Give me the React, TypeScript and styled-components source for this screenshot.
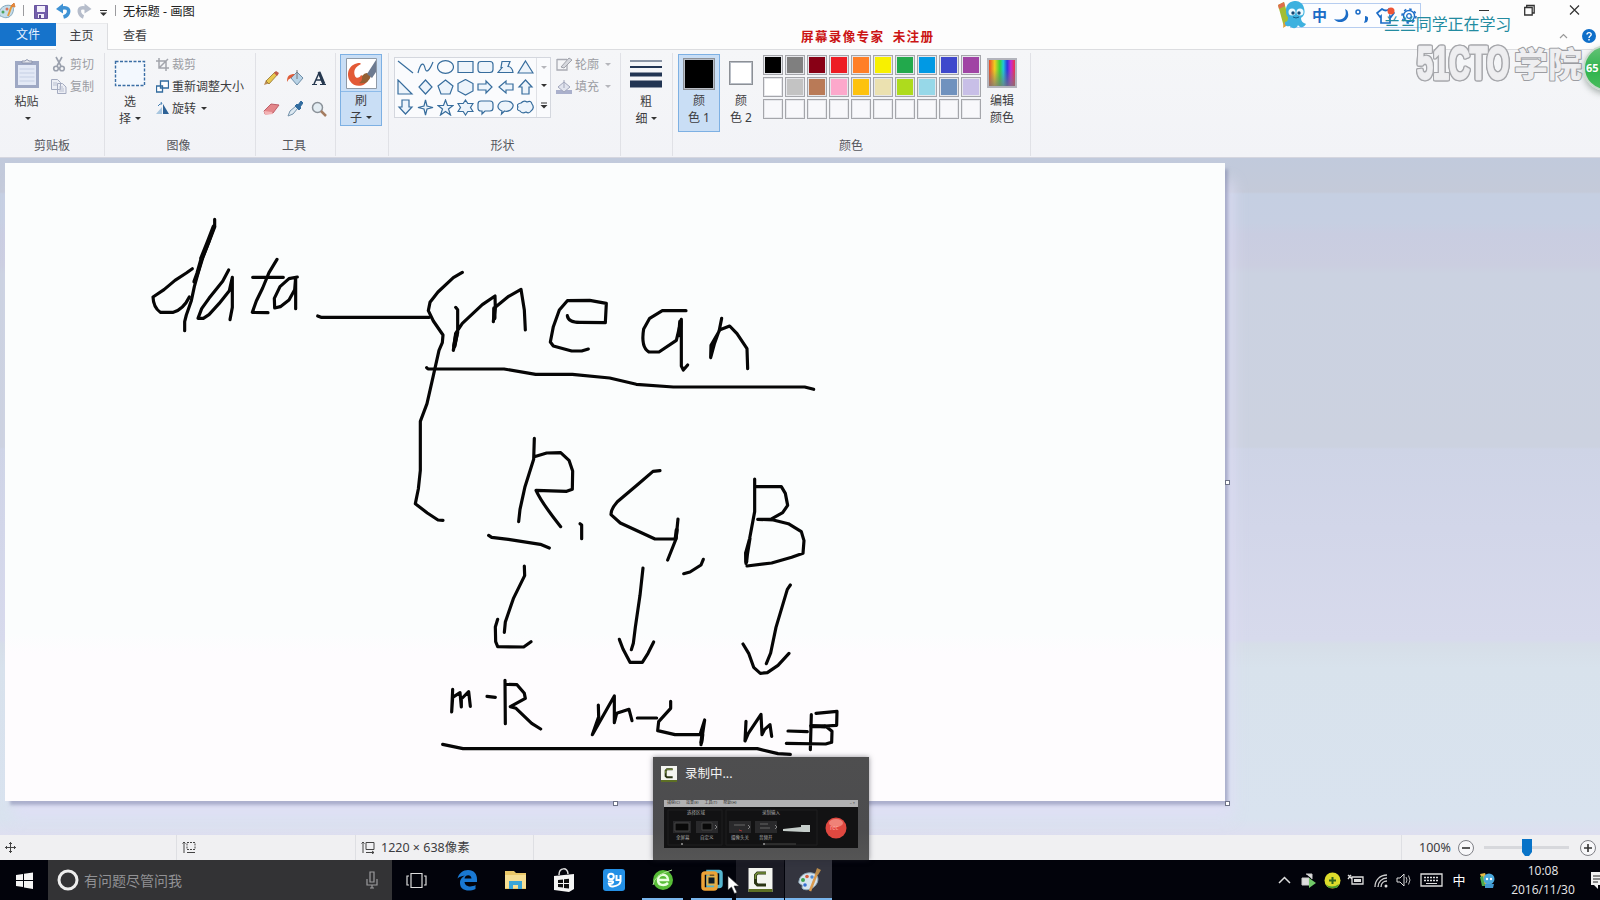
import React from "react";
import styled, { createGlobalStyle, css } from "styled-components";

const Global = createGlobalStyle`
  * { box-sizing: border-box; }
  body { margin: 0; overflow: hidden; }
  svg { display: block; flex: none; }
`;

const Screen = styled.div`
  position: relative;
  width: 1600px;
  height: 900px;
  overflow: hidden;
  display: flex;
  flex-direction: column;
  background: #fdfdfd;
  color: #3c3c40;
  font: 12px/17px "Noto Sans", "Noto Sans CJK SC", sans-serif;
`;

/* ---------- title bar and tabs ---------- */
const TitleBar = styled.header`
  display: flex;
  height: 23px;
  padding-right: 20px;
`;
const QuickAccess = styled.div`
  display: flex;
  align-items: center;
  flex: 1;
`;
const TitleText = styled.span`
  font-size: 12.3px;
  margin-left: 6px;
  color: #222;
  white-space: pre;
`;
const WindowButtons = styled.div`
  display: flex;
  align-items: center;
  gap: 34px;
  height: 20px;
`;
const TabRow = styled.nav`
  display: flex;
  height: 27px;
  border-bottom: 1px solid #dcdde0;
`;
const FileTab = styled.div`
  width: 56px;
  height: 23px;
  background: #1673cb;
  color: #e6f1ff;
  text-align: center;
  line-height: 24px;
`;
const Tab = styled.div<{ $active?: boolean }>`
  width: ${(p) => (p.$active ? 52 : 54)}px;
  height: 27px;
  text-align: center;
  line-height: 25px;
  ${(p) =>
    p.$active &&
    css`
      background: #f5f6f8;
      border-right: 1px solid #dcdde0;
      border-top: 1px solid #e9eaec;
      line-height: 24px;
    `}
`;
const TabTools = styled.div`
  margin-left: auto;
  display: flex;
  align-items: center;
  gap: 14px;
  padding-right: 4px;
`;

/* ---------- ribbon ---------- */
const Ribbon = styled.section`
  display: flex;
  height: 108px;
  padding-top: 3px;
  background: linear-gradient(#f5f6f8, #f2f3f7);
  border-bottom: 1px solid #d5d6df;
`;
const Group = styled.div<{ $w: number }>`
  width: ${(p) => p.$w}px;
  height: 103px;
  border-right: 1px solid #e0e1e6;
  display: flex;
  flex-direction: column;
`;
const GroupBody = styled.div<{ $left?: number }>`
  display: flex;
  align-items: flex-start;
  height: 84px;
  padding-left: ${(p) => p.$left ?? 0}px;
`;
const GroupLabel = styled.div<{ $shift?: number }>`
  text-align: center;
  color: #55565c;
  padding-right: ${(p) => p.$shift ?? 0}px;
`;
const BigButton = styled.div<{ $w: number; $h?: number; $selected?: boolean }>`
  width: ${(p) => p.$w}px;
  height: ${(p) => p.$h ?? 78}px;
  margin-top: 1px;
  display: flex;
  flex-direction: column;
  align-items: center;
  text-align: center;
  white-space: nowrap;
  ${(p) =>
    p.$selected &&
    css`
      background: #c9def5;
      border: 1px solid #7db0e3;
    `}
`;
const IconArea = styled.div<{ $h: number; $line?: boolean }>`
  height: ${(p) => p.$h}px;
  width: 100%;
  display: flex;
  align-items: center;
  justify-content: center;
  flex: none;
  border-bottom: ${(p) => (p.$line ? "1px solid #8dbbe9" : "none")};
`;
const Caret = styled.i<{ $dim?: boolean; $gap?: number }>`
  display: inline-block;
  margin-left: ${(p) => p.$gap ?? 3}px;
  vertical-align: 3px;
  border: 3px solid transparent;
  border-bottom: 0;
  border-top: 3.5px solid ${(p) => (p.$dim ? "#b5b6bb" : "#333")};
`;
const PasteCaret = styled(Caret)`
  margin-top: 7px;
`;
const SmallList = styled.div<{ $left: number; $top: number }>`
  display: grid;
  grid-auto-rows: 22px;
  padding-top: ${(p) => p.$top}px;
  margin-left: ${(p) => p.$left}px;
`;
const SmallItem = styled.div<{ $dim?: boolean }>`
  display: flex;
  align-items: center;
  gap: 3px;
  white-space: nowrap;
  color: ${(p) => (p.$dim ? "#9c9da3" : "#3c3c40")};
`;
const ToolGrid = styled.div`
  display: grid;
  grid-template-columns: repeat(3, 24px);
  grid-auto-rows: 31px;
  place-items: center;
  padding-top: 9px;
`;
const ShapeBox = styled.div`
  display: flex;
  width: 157px;
  height: 61px;
  margin-top: 4px;
  background: #fafbfd;
  border: 1px solid #d4d7de;
`;
const ShapeGrid = styled.div`
  display: grid;
  grid-template-columns: repeat(7, 20px);
  grid-auto-rows: 19.7px;
  place-items: center;
  width: 141px;
  height: 59px;
`;
const ShapeScroll = styled.div`
  flex: 1;
  border-left: 1px solid #dfe1e6;
  display: flex;
  flex-direction: column;
  align-items: center;
  justify-content: space-around;
`;
const Swatch = styled.div<{ $size: number; $color: string }>`
  width: ${(p) => p.$size}px;
  height: ${(p) => p.$size}px;
  background: ${(p) => p.$color};
  border: 1px solid #8c9096;
  box-shadow: inset 0 0 0 1px #b9bec6;
`;
const Palette = styled.div`
  display: grid;
  grid-template-columns: repeat(10, 20px);
  grid-auto-rows: 20px;
  gap: 2px;
  padding: 2px 0 0 1px;
`;
const PaletteCell = styled.div<{ $color: string }>`
  background: ${(p) => p.$color};
  border: 1px solid #a5a6ab;
  box-shadow: inset 0 0 0 1px #e6e7eb;
`;
const Spectrum = styled.div`
  width: 30px;
  height: 30px;
  border: 2px solid #b3b4bc;
  background: linear-gradient(transparent 35%, rgba(120, 120, 120, 0.75)),
    linear-gradient(90deg, #e8482a, #f0d020 22%, #35d23c 42%, #21c7d8 55%, #2b37dd 70%, #c22bd4 84%, #ee3344);
`;

/* ---------- work area ---------- */
const WorkArea = styled.main`
  height: 677px;
  padding: 5px 0 0 5px;
  background: linear-gradient(
    #c1cadc 0, #c4cad9 34px, #c5cfe2 36px, #c6cfe2 64px, #c9cde1 76px, #cbcee0 108px,
    #cbd2e1 116px, #ccd2e0 289px, #ced4e6 291px, #d2d6e9 370px, #d7daec 482px,
    #d6dee8 486px, #d8e2ec 510px, #d9e3ef 660px, #dedff0
  );
`;
const CanvasFrame = styled.div`
  position: relative;
  width: 1220px;
  height: 638px;
  background: linear-gradient(#fbfdfd 0, #fbfdfd 470px, #fefcfe 490px);
  box-shadow: 4px 5px 3px -1px rgba(122, 128, 165, 0.5), 8px 18px 14px rgba(224, 223, 246, 0.8);
`;
const Handle = styled.i<{ $x: number; $y: number }>`
  position: absolute;
  left: ${(p) => p.$x}px;
  top: ${(p) => p.$y}px;
  width: 5px;
  height: 5px;
  background: #fff;
  border: 1px solid #6d7286;
`;

/* ---------- status bar ---------- */
const StatusBar = styled.footer`
  display: flex;
  height: 25px;
  background: #f0f0f2;
  font-size: 12.5px;
`;
const StatusCell = styled.div<{ $w: number }>`
  width: ${(p) => p.$w}px;
  padding-left: 5px;
  display: flex;
  align-items: center;
  gap: 6px;
  border-right: 1px solid #dedfe3;
  white-space: nowrap;
`;
const ZoomArea = styled.div`
  flex: 1;
  display: flex;
  align-items: center;
  padding-left: 17px;
`;
const SliderTrack = styled.div`
  width: 85px;
  height: 3px;
  margin: 0 11px 0 7px;
  background: #d7d8dc;
  display: flex;
  align-items: center;
  padding-left: 38px;
`;

/* ---------- taskbar ---------- */
const TaskBar = styled.div`
  display: flex;
  height: 40px;
  background: #02030b;
  color: #e8e8ea;
`;
const StartCell = styled.div`
  width: 48px;
  display: grid;
  place-items: center;
`;
const SearchBox = styled.div`
  width: 344px;
  background: #333335;
  display: flex;
  align-items: center;
  padding: 0 14px 0 9px;
  gap: 5px;
  color: #919194;
  font-size: 14px;
`;
const SearchHint = styled.span`
  flex: 1;
`;
const TaskButton = styled.div<{ $w: number; $bg?: string; $running?: boolean }>`
  width: ${(p) => p.$w}px;
  display: grid;
  place-items: center;
  background: ${(p) => p.$bg ?? "transparent"};
  box-shadow: ${(p) => (p.$running ? "inset 0 -2px #79b5ec" : "none")};
  border: solid #02030b;
  border-width: ${(p) => (p.$bg ? "0 1px 0 0" : p.$running ? "0 4px" : "0")};
`;
const Tray = styled.div`
  margin-left: auto;
  display: flex;
  align-items: center;
`;
const TrayIcon = styled.div<{ $w: number }>`
  width: ${(p) => p.$w}px;
  display: flex;
  justify-content: center;
  font-size: 13px;
  color: #fff;
`;
const Clock = styled.div`
  width: 82px;
  text-align: center;
  font: 12px/19px "Open Sans", sans-serif;
`;

/* ---------- floating items ---------- */
const Preview = styled.div`
  position: absolute;
  left: 653px;
  top: 757px;
  width: 216px;
  height: 103px;
  padding: 8px 11px 0;
  background: linear-gradient(#4e4e4f, #4c4c4e 70%, #555);
  box-shadow: 0 0 5px rgba(40, 40, 50, 0.5);
`;
const PreviewTitle = styled.div`
  display: flex;
  align-items: center;
  gap: 8px;
  height: 17px;
  margin-left: -3px;
  color: #f2f2f2;
  font-size: 12.5px;
`;
const Recorder = styled.div`
  margin-top: 18px;
  height: 48px;
  background: #121213;
  color: #b5b5b5;
`;
const RecorderMenu = styled.div`
  height: 7px;
  background: #b1b1b2;
  color: #333;
  font-size: 4px;
  line-height: 6px;
  padding: 0 3px;
  display: flex;
  gap: 6px;
`;
const MenuEnd = styled.span`
  margin-left: auto;
`;
const ImeBar = styled.div`
  position: absolute;
  left: 1290px;
  top: 3px;
  width: 131px;
  height: 25px;
  border: 1px solid #b6cdf0;
  background: #fcfdff;
  display: flex;
  align-items: center;
  gap: 6px;
  padding-left: 21px;
  color: #1b6cc7;
  font-size: 15px;
  font-weight: 700;
`;
const Mascot = styled.div`
  position: absolute;
  left: 1277px;
  top: 1px;
`;
const RecorderMark = styled.div`
  position: absolute;
  left: 801px;
  top: 28px;
  color: #cb1414;
  font: 700 12.6px/16px "Noto Sans CJK SC", sans-serif;
  letter-spacing: 1.3px;
  white-space: pre;
`;
const LearnerMark = styled.div`
  position: absolute;
  left: 1384px;
  top: 13px;
  color: #238ba0;
  font: 16px/21px "Noto Sans CJK SC", sans-serif;
  letter-spacing: -0.1px;
`;
const BrandMark = styled.div`
  position: absolute;
  left: 1410px;
  top: 26px;
`;
const BrandLatin = styled.text`
  font: 900 46px "Liberation Sans", sans-serif;
  fill: #eeeef0;
  stroke: #ececef;
  stroke-width: 2.5px;
  filter: drop-shadow(1px 0 0 #a5a6aa) drop-shadow(-1px 0 0 #a5a6aa) drop-shadow(0 1px 0 #a5a6aa)
    drop-shadow(0 -1px 0 #a5a6aa);
`;
const BrandHan = styled.text`
  font: 900 34px "Noto Sans CJK SC", sans-serif;
  fill: #eeeef0;
  stroke: #9c9da2;
  stroke-width: 2px;
`;
const SpeedBall = styled.div`
  position: absolute;
  left: 1583px;
  top: 45px;
  width: 46px;
  height: 46px;
  border-radius: 50%;
  border: 2px solid #c9d9cd;
  background: linear-gradient(#63c276, #2fb34d 55%, #48bd5c);
  box-shadow: 0 3px 6px rgba(60, 80, 70, 0.4);
  color: #fff;
  font: 700 11px/41px "Open Sans", sans-serif;
  padding-left: 1px;
`;
const Pointer = styled.div`
  position: absolute;
  left: 727px;
  top: 875px;
`;

const S = ({ w, h, children, vb }: { w: number; h: number; vb?: string; children: React.ReactNode }) => (
  <svg width={w} height={h} viewBox={vb ?? `0 0 ${w} ${h}`} fill="none">
    {children}
  </svg>
);

const PaintIcon = ({ size = 26 }: { size?: number }) => (
  <S w={size} h={size} vb="0 0 26 26">
    <path d="M3 14C4 8 10 5 16 6c6 1 7 6 5 10-3 6-10 8-14 6-2-1 0-3-1-4-1-1-4-1-3-4Z" fill="#d5e3ec" stroke="#8fa9ba" />
    <circle cx="7" cy="13" r="2" fill="#3da04c" />
    <circle cx="11" cy="9.500" r="1.800" fill="#d5603c" />
    <circle cx="16" cy="10" r="1.700" fill="#4f8ad2" />
    <circle cx="9" cy="18" r="1.800" fill="#356fd1" />
    <path d="M14 24 21 6" stroke="#d99a4e" strokeWidth="2.500" />
    <path d="m19 7 2-6 4 2-3 5Z" fill="#b98b4b" />
  </S>
);

const CamtasiaIcon = ({ w, h }: { w: number; h: number }) => (
  <S w={w} h={h} vb="0 0 24 24">
    <path d="M0 0h24v24H0Z" fill="#f4f5f0" />
    <path d="M0 21h24v3H0Z" fill="#5d6f24" />
    <path d="M17.500 5H9L7 7v8l2 2h8.500" stroke="#2b3514" strokeWidth="3" />
    <path d="M17.500 5H9L7 7v4" stroke="#76903a" strokeWidth="1.500" />
  </S>
);

const SHAPES = [
  "M1 2 16 14",
  "M1 14C4 2 7 4 8 9s4 4 8-6",
  "M.5 8a8 6.300 0 1 0 16 0a8 6.300 0 1 0-16 0",
  "M1 2.500h15v11H1Z",
  "M4 2.500h9q3 0 3 3v5q0 3-3 3H4q-3 0-3-3V5.500q0-3 3-3Z",
  "M5 2.500h8l-2 5q4 0 5 6H1l4-5H4Z",
  "M8.500 2 16 14H1Z",
  "M1 1v14h14Z",
  "M8.500 1 15 8 8.500 15 2 8Z",
  "M8.500 1 16 7l-3 8H4L1 7Z",
  "M8.500.5 16 4.500v7.500l-7.500 4L1 12V4.500Z",
  "M1 5h8V2l6 6-6 6v-3H1Z",
  "M16 5H9V2L2 8l7 6v-3h7Z",
  "M5 15V8H2l6.500-7L15 8h-3v7Z",
  "M5 1v7H2l6.500 7L15 8h-3V1Z",
  "M8.500 1 10 7l6 1.500-6 1.500-1.500 6L7 10 1 8.500 7 7Z",
  "m8.500 1 2 5.500H16L11.500 10l2 6-5-3.500-5 3.500 2-6L1 6.500h5.500Z",
  "m8.500 1 2.300 3.500H16l-2.500 4 2.500 4h-5.200L8.500 16l-2.300-3.500H1l2.500-4-2.500-4h5.200Z",
  "M4 2h9q3 0 3 3v4q0 3-3 3H8l-3 3v-3H4q-3 0-3-3V5q0-3 3-3Z",
  "M5 12C-2 9 1 2 8.500 2s10 5 5 9q-3 2-6 1l-3 3Z",
  "M4 4q3-3 6-1 4-2 5 2 3 4-1 7-2 3-5 1-4 2-6-1-4-1-2-4-2-3 3-4Z",
];

const COLORS = [
  "#000", "#7f7f7f", "#880015", "#ed1c24", "#ff7f27", "#f8f000", "#22a94c", "#0099e4", "#3f48cc", "#a044a4",
  "#fff", "#c3c3c3", "#b97a57", "#fca8cb", "#fdc20f", "#ebe1b0", "#aedb1d", "#97d8e8", "#7092be", "#c8bfe7",
  ...Array(10).fill("#f8f8fb"),
];

/* Pen strokes on the canvas; each list is drawn at a third of its own units. */
const STROKES_LEFT = [
  "M157 206 139 219 105 241 72 269 39 291Q40 322 61 337L100 337Q130 328 148 291",
  "M224 58 224 76 207 124 188 174 174 220 163 260 154 302 139 345 134 365 134 392",
  "M266 210 248 244 207 295 185 326 174 355 190 355 207 344 237 311 268 272 277 232 277 322 270 359",
  "M411 178 387 218 368 264 349 303 337 337 384 338M338 232 430 232",
  "M472 231 447 236 420 260 403 295 404 324 421 320 447 300 464 269 467 232 467 326",
  "M533 348 543 352 868 352",
  "M967 217 940 233 894 276 870 307 865 332 880 363 909 405 907 428 897 451 880 527 861 611 841 664 841 811 835 867 826 911 862 939 894 960 909 961",
];
const STROKES_MEAN = [
  "M167 142 173 149 173 218 166 248 160 271 167 220 187 190 247 134 285 108 286 145 280 185 284 143 326 109 363 88 373 150 376 210",
  "M502 167Q505 187 540 187L616 188 619 130 569 121 502 122 478 150 460 200 451 246 460 258 515 273 545 273 565 267",
  "M858 152 787 152 749 175 731 207Q722 262 747 276L777 276 829 241 844 178 844 318 850 330 863 315",
  "M965 175 958 210 943 252 932 293 933 256 960 209 989 198 1011 221 1041 266 1043 326",
  "M80 323 84 327 312 327 407 343 517 343 629 354 709 373 820 381 1214 381 1241 388",
];
const STROKES_LOWER = [
  "M403 25 401 88 375 170 360 238 356 275M403 80 440 69 482 68 507 91 518 123 517 178 500 184 408 181Q426 220 482 290",
  "M540 281 545 285 545 326",
  "M266 316 275 322 325 328 421 343 448 354",
  "M780 122 759 124 715 162 652 215Q632 238 633 254L661 279 765 327 828 327 834 267 828 327 803 390",
  "M851 431 870 426 903 405 910 388",
  "M1064 147 1064 245 1049 325 1037 369 1038 400 1050 325M1064 170 1144 170 1156 190 1163 226 1148 248 1112 268 1073 268 1120 270 1165 281 1204 305 1212 332 1209 370 1175 382 1115 399 1041 408",
  "M373 408 374 437 340 506 316 576 313 607M293 568 286 591 287 635 293 650 371 651 393 635",
  "M729 414 720 496 706 592 700 640 694 659M658 628 669 657 690 697 727 697 744 670 761 636",
  "M1171 465 1162 478 1128 592 1112 669 1099 701M1029 642 1046 670 1061 712 1081 730 1102 728 1134 706 1167 670",
  "M158 778 155 846 158 802 180 788 184 831 184 807 206 785 211 829",
  "M261 799 286 802",
  "M315 751 316 881M315 763 351 764 373 790 376 805 331 830 348 835 395 880 422 897",
  "M595 825 596 860 577 914 643 798 643 878 650 850 687 838 696 872",
  "M712 864 770 864M812 814 812 835 776 875 773 902 825 914 900 914 914 870 903 944",
  "M1038 874 1035 933 1045 910 1083 853 1086 914 1094 898 1110 884 1115 919",
  "M1164 903 1222 905M1159 940 1277 942 1295 937 1296 904 1280 891 1232 887M1234 854 1231 959M1248 850 1311 844 1310 886 1275 888",
  "M128 943 189 956 1072 956 1134 971 1171 973",
];

const App = () => (
  <>
    <Global />
    <Screen>
      <TitleBar>
        <QuickAccess>
          <S w={117} h={23}>
            <path d="M-1 12c2-6 8-8 13-6 3 2 1 9-3 11-5 2-7-1-9-1Z" fill="#c5ddea" stroke="#82a6bc" />
            <path d="m8 16 4-11" stroke="#e49a3b" strokeWidth="2" />
            <path d="m11 6 3-3 1 4Z" fill="#ec883e" stroke="#d9813a" />
            <circle cx="3" cy="12" r="1.500" fill="#4ea45e" />
            <circle cx="7" cy="9" r="1.500" fill="#db7457" />
            <path d="M23.500 5v11M115.500 5v11" stroke="#9b9b9e" />
            <path d="M34.500 5.500h13v13h-13Z" fill="#745fab" stroke="#67539d" />
            <path d="M37 6h8v6h-8Z" fill="#f2effa" />
            <path d="M38 14h6v4h-6Z" fill="#f2effa" />
            <path d="M39 15h2v3h-2Z" fill="#5c4b8e" />
            <path d="M60 8.500c6-2 9.500 0 8.500 4q-1 3.500-5 4.500" stroke="#3f92d4" strokeWidth="3.500" />
            <path d="m56 9 7-5.500v10Z" fill="#3f92d4" />
            <path d="M87 8.500c-6-2-8.500 0-7.500 4q1 3.500 4 4.500" stroke="#b6bdcb" strokeWidth="3.500" />
            <path d="m91.500 9-7-5.500v10Z" fill="#b6bdcb" />
            <path d="M100 10.500h7" stroke="#333" />
            <path d="M100 12.500h7l-3.500 3.500Z" fill="#333" />
          </S>
          <TitleText>无标题 - 画图</TitleText>
        </QuickAccess>
        <WindowButtons>
          <S w={11} h={12}><path d="M0 6.500h10" stroke="#333" /></S>
          <S w={11} h={12}><path d="M.7 3.500h7.500V11H.7ZM2.700 3.500v-2h7.500V9h-2" stroke="#333" strokeWidth="1.300" /></S>
          <S w={11} h={12}><path d="m1 1.500 9 9m0-9-9 9" stroke="#333" strokeWidth="1.200" /></S>
        </WindowButtons>
      </TitleBar>
      <TabRow>
        <FileTab>文件</FileTab>
        <Tab $active>主页</Tab>
        <Tab>查看</Tab>
        <TabTools>
          <S w={9} h={6}><path d="m1 5 3.500-3.500L8 5" stroke="#999" strokeWidth="1.200" /></S>
          <S w={14} h={14}>
            <circle cx="7" cy="7" r="7" fill="#0f6fc9" />
            <path d="M5 5.500c0-2.500 4.200-2.500 4.200 0C9.200 7 7 7 7 9M7 10v1.500" stroke="#fff" strokeWidth="1.400" />
          </S>
        </TabTools>
      </TabRow>

      <Ribbon>
        <Group $w={105}>
          <GroupBody $left={5}>
            <BigButton $w={43}>
              <IconArea $h={39}>
                <S w={26} h={32}>
                  <path d="M1 3h24v27H1Z" fill="#9ea8c4" />
                  <path d="M4 7h18v20H4Z" fill="#e3e9f6" />
                  <path d="M5.500 11h15M5.500 15h15M5.500 19h15M5.500 23h15" stroke="#c5cfe4" />
                  <path d="M8 5V3h3q2-3 4 0h3v2Z" fill="#e7e9ef" stroke="#8b93ac" />
                </S>
              </IconArea>
              粘贴
              <PasteCaret $gap={3} />
            </BigButton>
            <SmallList $left={3} $top={0}>
              <SmallItem $dim>
                <S w={16} h={16}><path d="M5 1l5 9M11 1 6 10" stroke="#9aa0ad" strokeWidth="1.600" /><circle cx="5" cy="12.500" r="2.300" stroke="#9aa0ad" strokeWidth="1.600" /><circle cx="11" cy="12.500" r="2.300" stroke="#9aa0ad" strokeWidth="1.600" /></S>剪切
              </SmallItem>
              <SmallItem $dim>
                <S w={16} h={16}><path d="M.5 1.500h6l3 3v7h-9ZM6.500 5.500h5l3.500 3.500v6.500H6.500Z" fill="#eceef5" stroke="#a4abc0" /><path d="M8 9h4M8 11h5M8 13h5M2 5h4M2 7h4" stroke="#b9bfd0" /></S>复制
              </SmallItem>
            </SmallList>
          </GroupBody>
          <GroupLabel>剪贴板</GroupLabel>
        </Group>

        <Group $w={151}>
          <GroupBody $left={8}>
            <BigButton $w={34}>
              <IconArea $h={39}>
                <S w={32} h={27}><path d="M1.500 1.500h29v24h-29Z" fill="#f3f8fe" stroke="#3a6ea5" strokeWidth="1.400" strokeDasharray="3 1.500" /></S>
              </IconArea>
              选<br />
              <span>择<Caret $gap={4} /></span>
            </BigButton>
            <SmallList $left={9} $top={0}>
              <SmallItem $dim>
                <S w={13} h={13}><path d="M3 0v10h10M0 3h10v10M3 10l9-9" stroke="#a3a5ac" strokeWidth="1.500" /></S>裁剪
              </SmallItem>
              <SmallItem>
                <S w={13} h={13}><path d="M4.500 1h8v7h-8ZM.5 6h6v6h-6Z" fill="#fff" stroke="#326b9e" strokeWidth="1.300" /></S>重新调整大小
              </SmallItem>
              <SmallItem>
                <S w={13} h={13}><path d="M0 12 6 5v7Z" fill="#a8c6df" /><path d="M7 12V2l6 10Z" fill="#2e6296" /><path d="M2 4q2-3 4-2l-1-2" stroke="#3f7cb1" /></S>旋转<Caret $gap={2} />
              </SmallItem>
            </SmallList>
          </GroupBody>
          <GroupLabel $shift={3}>图像</GroupLabel>
        </Group>

        <Group $w={80}>
          <GroupBody $left={3}>
            <ToolGrid>
              <S w={16} h={16}><path d="m1 15 2-5 4 3Z" fill="#ba8b55" /><path d="M3 11 12 2l3 2-9 10Z" fill="#e8c74f" stroke="#927230" strokeWidth=".8" /><path d="m11 3 2-2 3 2-2 3Z" fill="#c05b4b" /></S>
              <S w={18} h={16}><path d="m5 8 6-6 6 6-6 7Z" fill="#b9d3e6" stroke="#6e8ea8" /><path d="M11 9V0" stroke="#777" /><path d="M1 12c0-6 2-8 8-8L5 8q-3 1-4 4Z" fill="#df5d39" /></S>
              <S w={16} h={16}><path d="M3 14 8 3l4 11M5 10h5" stroke="#26384f" strokeWidth="1.500" /><path d="m8 2 5 12" stroke="#26384f" strokeWidth="3" /><path d="M1 14.500h5M9 14.500h6" stroke="#26384f" /></S>
              <S w={17} h={14}><path d="m1 9 7-7 8 1-6 8-8 1Z" fill="#e3868a" stroke="#be5e68" /><path d="m1 9 8 1 1 2-8 1Z" fill="#f3b3b5" /></S>
              <S w={16} h={16}><path d="m1 15 2-5 6-5 2 2-5 6Z" fill="#dce8f1" stroke="#7492aa" /><path d="m8 5 2-2 4 4-2 2ZM11 4l3-4 2 2-3 4Z" fill="#326c9f" stroke="#326c9f" /></S>
              <S w={16} h={16}><circle cx="6.500" cy="6.500" r="5" fill="#e4edf3" stroke="#8b9299" strokeWidth="1.500" /><path d="m10 10 5 5" stroke="#a47c61" strokeWidth="2.500" /></S>
            </ToolGrid>
          </GroupBody>
          <GroupLabel $shift={3}>工具</GroupLabel>
        </Group>

        <Group $w={53}>
          <GroupBody $left={4}>
            <BigButton $w={42} $h={72} $selected>
              <IconArea $h={37} $line>
                <S w={33} h={33}>
                  <path d="M1.500 1.500h30v30h-30Z" fill="#fff" stroke="#8f9aa7" />
                  <path d="M15 6C5 6 0 16 5 24c5 8 16 5 18-1l-7-5c-1 3-5 4-6 1C8 14 10 10 16 7Z" fill="#e35a36" />
                  <path d="M17 19q5-6 9 0-3 9-12 7 4-2 3-7Z" fill="#936035" />
                  <path d="m22 17 9-14v12l-4 6Z" fill="#6c7a90" />
                </S>
              </IconArea>
              刷<br />
              <span>子<Caret $gap={4} /></span>
            </BigButton>
          </GroupBody>
        </Group>

        <Group $w={232}>
          <GroupBody $left={5}>
            <ShapeBox>
              <ShapeGrid>
                {SHAPES.map((d) => (
                  <S key={d} w={17} h={17}><path d={d} fill={d.endsWith("Z") ? "#edf4fb" : "none"} stroke="#376d9d" strokeWidth="1.200" /></S>
                ))}
              </ShapeGrid>
              <ShapeScroll>
                <Caret $dim $gap={0} />
                <Caret $gap={0} />
                <S w={8} h={7}><path d="M1 1h6" stroke="#333" /><path d="M.5 3h7L4 6.500Z" fill="#333" /></S>
              </ShapeScroll>
            </ShapeBox>
            <SmallList $left={5} $top={0}>
              <SmallItem $dim>
                <S w={16} h={15}><path d="M1 2.500h10M1 2v11h10V8" stroke="#a9abb3" strokeWidth="1.300" /><path d="m5 10 8-9 3 2-8 8Z" fill="#d6d8de" stroke="#a0a2aa" /></S>轮廓<Caret $dim />
              </SmallItem>
              <SmallItem $dim>
                <S w={16} h={15}><path d="M0 11h16v4H0Z" fill="#aab0cc" /><path d="m2 8 6-5 6 5-6 5Z" fill="#e1e4ee" stroke="#a1a6bb" /><path d="M8 9V1" stroke="#a1a6bb" /></S>填充<Caret $dim />
              </SmallItem>
            </SmallList>
          </GroupBody>
          <GroupLabel $shift={4}>形状</GroupLabel>
        </Group>

        <Group $w={52}>
          <GroupBody $left={7}>
            <BigButton $w={36}>
              <IconArea $h={39}>
                <S w={32} h={28}><path d="M0 1h32" stroke="#223553" /><path d="M0 7h32" stroke="#223553" strokeWidth="2" /><path d="M0 14.500h32" stroke="#223553" strokeWidth="4" /><path d="M0 24h32" stroke="#223553" strokeWidth="7" /></S>
              </IconArea>
              粗<br />
              <span>细<Caret $gap={3} /></span>
            </BigButton>
          </GroupBody>
        </Group>

        <Group $w={358}>
          <GroupBody $left={5}>
            <BigButton $w={42} $h={78} $selected>
              <IconArea $h={37}><Swatch $size={32} $color="#000" /></IconArea>
              颜<br />色 1
            </BigButton>
            <BigButton $w={42}>
              <IconArea $h={38}><Swatch $size={24} $color="#fff" /></IconArea>
              颜<br />色 2
            </BigButton>
            <Palette>
              {COLORS.map((c, i) => <PaletteCell key={i} $color={c} />)}
            </Palette>
            <BigButton $w={42}>
              <IconArea $h={38}><Spectrum /></IconArea>
              编辑<br />颜色
            </BigButton>
          </GroupBody>
          <GroupLabel $shift={1}>颜色</GroupLabel>
        </Group>
      </Ribbon>

      <WorkArea>
        <CanvasFrame>
          <svg width="1220" height="638" viewBox="5 163 1220 638" fill="none" stroke="#060606" strokeWidth="9.500" strokeLinecap="round" strokeLinejoin="round">
            <g transform="translate(140 200) scale(.33333)">
              {STROKES_LEFT.map((d) => <path key={d} d={d} />)}
              <path d="M222 80 205 124 185 174" strokeWidth="14" />
              <path d="M185 174 172 220 163 245" strokeWidth="12" />
            </g>
            <g transform="translate(400 260) scale(.33333)">
              {STROKES_MEAN.map((d) => <path key={d} d={d} />)}
              <path d="M169 225 163 258M841 185 838 225M283 145v30" strokeWidth="13" />
            </g>
            <g transform="translate(400 430) scale(.33333)">
              {STROKES_LOWER.map((d) => <path key={d} d={d} />)}
              <path d="M1039 370v25M830 300l-3 25M907 915l-3 22M1234 889h40" strokeWidth="12" />
            </g>
          </svg>
          <Handle $x={1220} $y={317} />
          <Handle $x={1220} $y={638} />
          <Handle $x={608} $y={638} />
        </CanvasFrame>
      </WorkArea>

      <StatusBar>
        <StatusCell $w={177}>
          <S w={11} h={11}><path d="M5.500 0v11M0 5.500h11M4 2l1.500-1.500L7 2M4 9l1.500 1.500L7 9M2 4 .5 5.500 2 7M9 4l1.500 1.500L9 7" stroke="#444" /></S>
        </StatusCell>
        <StatusCell $w={179}>
          <S w={14} h={13}><path d="M2 12V1M.5 2.500 2 1l1.500 1.500" stroke="#444" /><path d="M5 1.500h8v7H5Z" stroke="#444" strokeDasharray="2 1" /><path d="M5 11.500h8" stroke="#444" /></S>
        </StatusCell>
        <StatusCell $w={178}>
          <S w={14} h={13}><path d="M2 12V1M.5 2.500 2 1l1.500 1.500M5 1.500h8v7H5ZM5 11.500h8m-2-1.500 2 1.500-2 1.500" stroke="#444" /></S>
          1220 × 638像素
        </StatusCell>
        <StatusCell $w={868} />
        <ZoomArea>
          100%
          <S w={26} h={18}><circle cx="15" cy="9" r="7.500" fill="#f8f8fa" stroke="#7f8086" /><path d="M11 9h8" stroke="#333" strokeWidth="1.600" /></S>
          <SliderTrack><S w={10} h={17}><path d="M0 0h10v13l-3 4H3l-3-4Z" fill="#0873c8" /></S></SliderTrack>
          <S w={18} h={18}><circle cx="8" cy="9" r="7.500" fill="#f8f8fa" stroke="#7f8086" /><path d="M4 9h8M8 5v8" stroke="#333" strokeWidth="1.600" /></S>
        </ZoomArea>
      </StatusBar>

      <TaskBar>
        <StartCell>
          <S w={17} h={17}><path d="M0 3 7 2v6H0ZM8 1.800 17 .5V8H8ZM0 9h7v6l-7-1ZM8 9h9v8l-9-1.500Z" fill="#f5f5f5" /></S>
        </StartCell>
        <SearchBox>
          <S w={22} h={22}><circle cx="11" cy="11" r="9" stroke="#ededed" strokeWidth="3" /></S>
          <SearchHint>有问题尽管问我</SearchHint>
          <S w={12} h={18}><path d="M4 1h4v10H4ZM1 8v6h10V8M6 14v3M4 17h4" stroke="#9b9b9d" strokeWidth="1.200" /></S>
        </SearchBox>
        <TaskButton $w={48}>
          <S w={21} h={15}><path d="M5 .5h11v14H5ZM3 3H1v9h2M18 3h2v9h-2" stroke="#ddd" strokeWidth="1.200" /></S>
        </TaskButton>
        <TaskButton $w={54}>
          <S w={21} h={22}><path d="M.5 9.500C2 4 6 1 11 1c6 0 9 4 9 9.500V13H7.500c.5 5 7 5.500 11 3v4C12 23 3 22 3 14c0-4 2.500-6 5-7.500-3 .5-5.500 1-7.500 3ZM7.500 9.500h7C14.500 5 8 5 7.500 9.500Z" fill="#1978d2" /></S>
        </TaskButton>
        <TaskButton $w={44}>
          <S w={22} h={20}><path d="M0 1h9l2 2h10v16H0Z" fill="#eac869" /><path d="M0 5h21v13H0Z" fill="#f6df94" /><path d="M4 11h13v8h-4v-4H8v4H4Z" fill="#3aa6d8" /></S>
        </TaskButton>
        <TaskButton $w={52}>
          <S w={22} h={24}><path d="m1 8 20-2v15l-5 3-15-2Z" fill="#f5f5f5" /><path d="M6 7c0-8 9-8 9-1" stroke="#ddd" strokeWidth="1.500" /><path d="m5 12 5-.5V15H5Zm6-.7 5-.5V15h-5ZM5 16h5v3.500L5 19Zm6 0h5v4.500l-5-.6Z" fill="#111" /></S>
        </TaskButton>
        <TaskButton $w={48}>
          <S w={24} h={24}>
            <path d="M4 1h16q3 0 3 3v16q0 3-3 3H4q-3 0-3-3V4q0-3 3-3Z" fill="#2490e6" />
            <circle cx="9" cy="8.500" r="2.800" stroke="#fff" strokeWidth="2" />
            <path d="M6 13.500q6-1 5 1t-4 1.500q1 3 4 2.500 7-1 7.500-5V7M14.500 7v5h3.500" stroke="#fff" strokeWidth="2" />
          </S>
        </TaskButton>
        <TaskButton $w={49} $running>
          <S w={22} h={22}><circle cx="11" cy="11" r="10" fill="#58bd37" /><path d="M6 11h10c0-7-10-7-10 0 0 6 7 6 10 3" stroke="#eaffdf" strokeWidth="2.500" /><path d="M1 16Q2 6 20 1" stroke="#b4e29a" /></S>
        </TaskButton>
        <TaskButton $w={49} $running>
          <S w={22} h={22}>
            <path d="M7 2.500h11q2 0 2 2v11q0 2-2 2H7Z" stroke="#55b5cf" strokeWidth="3.500" />
            <path d="M4 4h9q2 0 2 2v12q0 2-2 2H4q-2 0-2-2V6q0-2 2-2Z" stroke="#eda336" strokeWidth="3.500" />
            <path d="M6.500 7.500h8v8h-8Z" fill="#0b1a26" stroke="#e0b14c" strokeWidth="2" />
          </S>
        </TaskButton>
        <TaskButton $w={49} $bg="#1b1b24" $running><CamtasiaIcon w={25} h={24} /></TaskButton>
        <TaskButton $w={48} $bg="#34353f" $running><PaintIcon /></TaskButton>
        <Tray>
          <TrayIcon $w={24}><S w={13} h={8}><path d="m1 7 5.500-5.500L12 7" stroke="#ddd" strokeWidth="1.500" /></S></TrayIcon>
          <TrayIcon $w={25}><S w={16} h={16}><path d="M1 6h7v7H1Zm4-4h6v5" fill="#ddd" stroke="#ccc" /><path d="m8 6 7 5-7 5Z" fill="#71c968" /></S></TrayIcon>
          <TrayIcon $w={23}><S w={17} h={17}><circle cx="8.500" cy="8.500" r="8" fill="#dddc2b" /><path d="M1 12q7 5 14 0l-2 4H5Z" fill="#4b9b2e" /><path d="M8.500 5v7M5 8.500h7" stroke="#31651e" strokeWidth="2" /></S></TrayIcon>
          <TrayIcon $w={24}><S w={18} h={12}><path d="M5 3h11v7H5ZM1 1l4 4M1 5l3-4" stroke="#ddd" strokeWidth="1.300" /><path d="M7 5h7v3H7Z" fill="#ddd" /></S></TrayIcon>
          <TrayIcon $w={25}><S w={14} h={15}><path d="M1 14C1 7 6 2 13 2M4 14c0-5 4-9 9-9M7 14c0-4 3-6 6-6" stroke="#ccc" strokeWidth="1.400" /><circle cx="12" cy="13" r="1.500" fill="#ddd" /></S></TrayIcon>
          <TrayIcon $w={23}><S w={17} h={14}><path d="M1 5h3l4-4v12L4 9H1Z" stroke="#ddd" /><path d="M10 4q2 3 0 6M12.500 2.500q3 4.500 0 9" stroke="#bbb" /></S></TrayIcon>
          <TrayIcon $w={30}><S w={23} h={14}><path d="M1 1h21v12H1Z" stroke="#ddd" strokeWidth="1.300" /><path d="M4 4.500h15M4 7.500h15" stroke="#ddd" strokeDasharray="2 1" strokeWidth="1.500" /><path d="M6 10.500h11" stroke="#ddd" /></S></TrayIcon>
          <TrayIcon $w={26}>中</TrayIcon>
          <TrayIcon $w={30}><S w={17} h={17}><path d="m1 2 5-1 5 14-5-1Z" fill="#e3b842" /><path d="m1 5 3-1 2 10H3Z" fill="#4aad4f" /><circle cx="10" cy="7" r="5.500" fill="#4aa9dd" /><path d="M6 12h9l-1 4H6Z" fill="#4298d1" /><circle cx="8" cy="7" r="1.200" fill="#fff" /><circle cx="12" cy="7" r="1.200" fill="#fff" /></S></TrayIcon>
          <Clock>10:08<br />2016/11/30</Clock>
          <TrayIcon $w={16}><S w={16} h={18}><path d="M7 1h12v13h-5v4l-4-4H7Z" fill="#f2f2f2" /><path d="M9 5h8M9 8h8M9 11h5" stroke="#222" /></S></TrayIcon>
        </Tray>
      </TaskBar>

      <Preview>
        <PreviewTitle><CamtasiaIcon w={16} h={16} />录制中...</PreviewTitle>
        <Recorder>
          <RecorderMenu><span>捕获(C)</span><span>效果(E)</span><span>工具(T)</span><span>帮助(H)</span><MenuEnd>– ×</MenuEnd></RecorderMenu>
          <svg width="194" height="41" fill="none">
            <path d="M4 3h54v35H4ZM62 3h91v35H62Z" stroke="#1f1f21" />
            <path d="M9 14h18v12H9ZM32 14h22v12H32ZM65 14h22v12H65ZM91 14h22v12H91Z" fill="#29292b" />
            <path d="M11 16h14v8H11ZM38 16h10v7H38Z" fill="#090909" stroke="#444" />
            <path d="M70 18h11M96 17h8M96 21h10" stroke="#666" />
            <path d="m75 23 3 1" stroke="#af3333" />
            <path d="m51 18 2 2-2 2M84 18l2 2-2 2M111 18l2 2-2 2" stroke="#aaa" strokeWidth=".7" />
            <path d="m119 22 18-2v-2h9v7h-6l-21-1Z" fill="#c5cdca" />
            <path d="M100 37h32" stroke="#444" /><circle cx="18" cy="37" r="1" fill="#999" /><circle cx="100" cy="37" r="1" fill="#999" />
            <circle cx="172" cy="21" r="10.500" fill="#df4840" /><ellipse cx="172" cy="16" rx="7" ry="4" fill="#ef8278" />
            <g fill="#aaa" fontFamily="Noto Sans CJK SC" fontSize="4.500">
              <text x="23" y="7">选择区域</text><text x="98" y="7">录制输入</text>
              <text x="12" y="32">全屏幕</text><text x="36" y="32">自定义</text><text x="67" y="32">摄像头关</text><text x="95" y="32">音频开</text>
              <text x="166" y="23" fontSize="6" fill="#ffaaa0">rec</text>
            </g>
          </svg>
        </Recorder>
      </Preview>

      <ImeBar>
        中
        <S w={16} h={16}><path d="M12 1c3 8-3 12-11 10 6 7 16 1 14-6q0-3-3-4Z" fill="#1b6cc7" /></S>
        <S w={15} h={16}><circle cx="3" cy="4" r="2" stroke="#1b6cc7" strokeWidth="1.500" /><path d="M10 8q5 0 2 6l-3 1 1-3Z" fill="#1b6cc7" /></S>
        <S w={19} h={18}><path d="m6 2-5 4 3 4 1-1v7h9V9l1 1 3-4-5-4q-3 3-7 0Z" stroke="#1b6cc7" strokeWidth="1.700" /><circle cx="15" cy="4" r="3.500" fill="#ee5435" /></S>
        <S w={16} h={16}><circle cx="8" cy="8" r="5.500" stroke="#1b6cc7" strokeWidth="1.400" /><circle cx="8" cy="8" r="7" stroke="#1b6cc7" strokeWidth="1.500" strokeDasharray="2.500 3" /><circle cx="8" cy="8" r="2.300" stroke="#1b6cc7" strokeWidth="1.300" /></S>
      </ImeBar>
      <Mascot>
        <S w={30} h={28}>
          <path d="m1 4 6-3 6 21-6 4Z" fill="#a3bd34" /><path d="m1 4 6-3 1 4-6 3Z" fill="#e06d4b" /><path d="m6 27 1-6 5 2Z" fill="#e39a3a" />
          <path d="M9 8C10-2 25-3 27 7c2 7-2 9-3 10 0 4 3 5 5 6-3 5-7 3-8 1-1 4-6 4-8 1-3 1-6-1-5-4 3 0 3-3 3-5-2-1-2-5-2-8Z" fill="#3db1df" />
          <circle cx="15" cy="11" r="3.500" fill="#eefaff" /><circle cx="23" cy="11" r="3.500" fill="#eefaff" /><circle cx="16" cy="12" r="1.700" fill="#124775" /><circle cx="22" cy="12" r="1.700" fill="#124775" />
          <path d="M16 16q3 2 6 0" stroke="#165e8a" />
        </S>
      </Mascot>
      <RecorderMark>屏幕录像专家  未注册</RecorderMark>
      <LearnerMark>兰兰同学正在学习</LearnerMark>
      <BrandMark>
        <svg width="184" height="70" paintOrder="stroke" strokeLinejoin="round">
          <BrandLatin x="7" y="53" textLength="92" lengthAdjust="spacingAndGlyphs">51CTO</BrandLatin>
          <BrandHan x="104" y="51" textLength="68" lengthAdjust="spacingAndGlyphs">学院</BrandHan>
        </svg>
      </BrandMark>
      <SpeedBall>65</SpeedBall>
      <Pointer>
        <S w={14} h={20}><path d="M1 1v14l3.500-3 3 6.500 2.500-1-3-6.500H12Z" fill="#fff" stroke="#333" strokeWidth=".6" /></S>
      </Pointer>
    </Screen>
  </>
);

export default App;
